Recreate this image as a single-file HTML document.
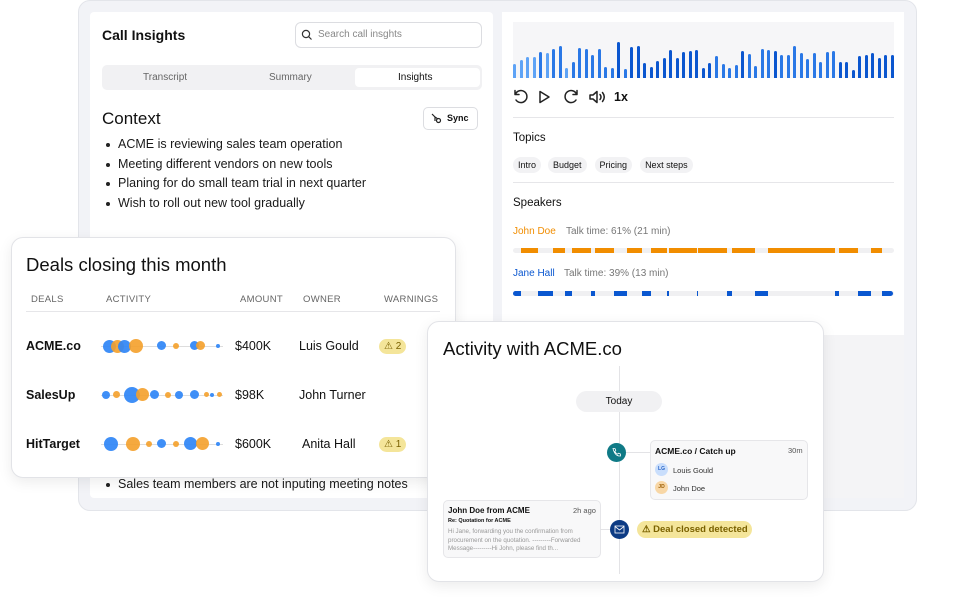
<!DOCTYPE html>
<html><head><meta charset="utf-8"><style>
*{box-sizing:border-box;margin:0;padding:0}
body{width:963px;height:600px;background:#fff;font-family:"Liberation Sans",sans-serif;color:#111;position:relative;overflow:hidden}
.a{position:absolute}
.frame{left:78px;top:0;width:839px;height:511px;background:#f2f3f7;border:1px solid #e3e5ea;border-radius:12px}
.lp{left:90px;top:12px;width:403px;height:486px;background:#fff;border-radius:4px}
.rp{left:502px;top:12px;width:402px;height:486px;background:#f4f4f6}
.rpw{left:502px;top:12px;width:402px;height:323px;background:#fff}
ul{list-style:none}
li{position:relative;padding-left:16px;font-size:12.5px;line-height:19.5px;color:#1a1a1a}
li:before{content:"";position:absolute;left:4px;top:8px;width:4px;height:4px;border-radius:50%;background:#222}
.card{background:#fff;border:1px solid #e2e3e7;border-radius:12px;box-shadow:0 4px 14px rgba(0,0,0,.08)}
.th{font-size:9.5px;color:#666;letter-spacing:.3px}
.dl{font-size:12.5px;font-weight:bold}
.tx{font-size:12.5px}
.warn{background:#f4e59a;color:#7a6100;border-radius:8px;font-size:10px;padding:2px 5px}
.c{position:absolute;border-radius:50%}
.b{background:#2f86f6;opacity:.92}.o{background:#f4a02a;opacity:.9}
.wf{left:513px;top:22px;width:381px;height:56px;background:#f6f6f8;display:flex;align-items:flex-end;justify-content:space-between;padding:0}
.wf i{display:block;width:3px;border-radius:2px 2px 0 0}
.l{background:#5ea3f6}.m{background:#2a78e6}.d{background:#0b56cf}
.tag{display:inline-block;background:#f2f2f4;border-radius:8px;font-size:9px;padding:3px 5px;margin-right:5px}
.seg{position:absolute;height:5px}
.or{background:#f18d00}.bl{background:#0a57d0}
</style></head><body>
<div class="a frame"></div>
<div class="a rp"></div>
<div class="a rpw"></div>
<div class="a lp"></div>

<!-- left panel -->
<div class="a" style="left:102px;top:27px;font-size:14px;font-weight:bold">Call Insights</div>
<div class="a" style="left:295px;top:22px;width:187px;height:26px;border:1px solid #dcdde1;border-radius:6px;background:#fff"></div>
<svg class="a" style="left:301px;top:29px" width="12" height="12" viewBox="0 0 12 12"><circle cx="5" cy="5" r="3.6" fill="none" stroke="#333" stroke-width="1.2"/><path d="M7.7 7.7L10.5 10.5" stroke="#333" stroke-width="1.2"/></svg>
<div class="a" style="left:318px;top:29px;font-size:10px;color:#888">Search call insghts</div>
<div class="a" style="left:102px;top:65px;width:380px;height:25px;background:#f1f1f3;border-radius:5px"></div>
<div class="a" style="left:355px;top:68px;width:125px;height:19px;background:#fff;border-radius:4px"></div>
<div class="a" style="left:143px;top:72px;font-size:10px;color:#666">Transcript</div>
<div class="a" style="left:269px;top:72px;font-size:10px;color:#666">Summary</div>
<div class="a" style="left:398px;top:72px;font-size:10px;color:#111">Insights</div>
<div class="a" style="left:102px;top:109px;font-size:17px">Context</div>
<div class="a" style="left:423px;top:107px;width:55px;height:23px;border:1px solid #dcdde1;border-radius:5px;background:#fff"></div>
<svg class="a" style="left:431px;top:113px" width="11" height="11" viewBox="0 0 11 11"><path d="M1 1L4 4M4 4L4 8M4 4L7 6" stroke="#222" stroke-width="1.2" fill="none"/><circle cx="7.5" cy="7.5" r="2" fill="none" stroke="#222" stroke-width="1.2"/></svg>
<div class="a" style="left:447px;top:113px;font-size:9px;font-weight:bold">Sync</div>
<ul class="a" style="left:102px;top:135px">
<li>ACME is reviewing sales team operation</li>
<li>Meeting different vendors on new tools</li>
<li>Planing for do small team trial in next quarter</li>
<li>Wish to roll out new tool gradually</li>
</ul>
<ul class="a" style="left:102px;top:475px"><li>Sales team members are not inputing meeting notes</li></ul>

<!-- waveform -->
<div class="a wf">
<i class="l" style="height:14px"></i><i class="l" style="height:18px"></i><i class="l" style="height:21px"></i><i class="l" style="height:21px"></i><i class="m" style="height:26px"></i><i class="l" style="height:25px"></i><i class="m" style="height:29px"></i><i class="m" style="height:32px"></i><i class="l" style="height:10px"></i><i class="m" style="height:16px"></i><i class="m" style="height:30px"></i><i class="m" style="height:29px"></i><i class="m" style="height:23px"></i><i class="m" style="height:29px"></i><i class="m" style="height:11px"></i><i class="m" style="height:10px"></i><i class="d" style="height:36px"></i><i class="m" style="height:9px"></i><i class="d" style="height:31px"></i><i class="d" style="height:32px"></i><i class="d" style="height:15px"></i><i class="d" style="height:11px"></i><i class="d" style="height:17px"></i><i class="d" style="height:20px"></i><i class="d" style="height:28px"></i><i class="d" style="height:20px"></i><i class="d" style="height:26px"></i><i class="d" style="height:27px"></i><i class="d" style="height:28px"></i><i class="d" style="height:10px"></i><i class="d" style="height:15px"></i><i class="m" style="height:22px"></i><i class="m" style="height:14px"></i><i class="m" style="height:10px"></i><i class="m" style="height:13px"></i><i class="d" style="height:27px"></i><i class="m" style="height:24px"></i><i class="m" style="height:12px"></i><i class="m" style="height:29px"></i><i class="m" style="height:28px"></i><i class="d" style="height:27px"></i><i class="m" style="height:23px"></i><i class="m" style="height:23px"></i><i class="m" style="height:32px"></i><i class="m" style="height:25px"></i><i class="m" style="height:19px"></i><i class="m" style="height:25px"></i><i class="m" style="height:16px"></i><i class="m" style="height:26px"></i><i class="m" style="height:27px"></i><i class="d" style="height:16px"></i><i class="d" style="height:16px"></i><i class="d" style="height:8px"></i><i class="d" style="height:22px"></i><i class="d" style="height:23px"></i><i class="d" style="height:25px"></i><i class="d" style="height:20px"></i><i class="d" style="height:23px"></i><i class="d" style="height:23px"></i>
</div>
<svg class="a" style="left:513px;top:89px" width="100" height="16" viewBox="0 0 100 16" fill="none" stroke="#222" stroke-width="1.5" stroke-linecap="round" stroke-linejoin="round">
<path d="M2.5 5A6 6 0 1 1 3 11M2 1.5V5.5H6"/>
<path d="M27 2.5L36 8L27 13.5Z"/>
<path d="M63.5 5A6 6 0 1 0 63 11M64 1.5V5.5H60"/>
<path d="M77 6H80L84 2.5V13.5L80 10H77Z M87 5.5Q89 8 87 10.5 M89.5 3.5Q93 8 89.5 12.5"/>
</svg>
<div class="a" style="left:614px;top:90px;font-size:12.5px;font-weight:bold">1x</div>
<div class="a" style="left:513px;top:117px;width:381px;height:1px;background:#e6e6e9"></div>
<div class="a" style="left:513px;top:132px;font-size:11.5px">Topics</div>
<div class="a" style="left:513px;top:155px"><span class="tag">Intro</span><span class="tag" style="margin-left:2px">Budget</span><span class="tag" style="margin-left:3px">Pricing</span><span class="tag" style="margin-left:3px">Next steps</span></div>
<div class="a" style="left:513px;top:182px;width:381px;height:1px;background:#e6e6e9"></div>
<div class="a" style="left:513px;top:197px;font-size:11.5px">Speakers</div>
<div class="a" style="left:513px;top:226px;font-size:10px;color:#f18d00">John Doe</div>
<div class="a" style="left:566px;top:226px;font-size:10px;color:#777">Talk time: 61% (21 min)</div>
<div class="a" style="left:513px;top:248px;width:381px;height:5px;background:#f0f0f2;border-radius:3px"></div>
<div class="seg or" style="left:521px;top:248px;width:17px"></div><div class="seg or" style="left:553px;top:248px;width:12px"></div><div class="seg or" style="left:572px;top:248px;width:19px"></div><div class="seg or" style="left:595px;top:248px;width:19px"></div><div class="seg or" style="left:627px;top:248px;width:15px"></div><div class="seg or" style="left:651px;top:248px;width:16px"></div><div class="seg or" style="left:669px;top:248px;width:28px"></div><div class="seg or" style="left:698px;top:248px;width:29px"></div><div class="seg or" style="left:732px;top:248px;width:23px"></div><div class="seg or" style="left:768px;top:248px;width:67px"></div><div class="seg or" style="left:839px;top:248px;width:19px"></div><div class="seg or" style="left:871px;top:248px;width:11px"></div>
<div class="a" style="left:513px;top:268px;font-size:10px;color:#0a57d0">Jane Hall</div>
<div class="a" style="left:564px;top:268px;font-size:10px;color:#777">Talk time: 39% (13 min)</div>
<div class="a" style="left:513px;top:291px;width:381px;height:5px;background:#f0f0f2;border-radius:3px"></div>
<div class="seg bl" style="left:513px;top:291px;width:8px;border-radius:3px 0 0 3px"></div><div class="seg bl" style="left:538px;top:291px;width:15px"></div><div class="seg bl" style="left:565px;top:291px;width:7px"></div><div class="seg bl" style="left:591px;top:291px;width:4px"></div><div class="seg bl" style="left:614px;top:291px;width:13px"></div><div class="seg bl" style="left:642px;top:291px;width:9px"></div><div class="seg bl" style="left:667px;top:291px;width:2px"></div><div class="seg bl" style="left:697px;top:291px;width:1px"></div><div class="seg bl" style="left:727px;top:291px;width:5px"></div><div class="seg bl" style="left:755px;top:291px;width:13px"></div><div class="seg bl" style="left:835px;top:291px;width:4px"></div><div class="seg bl" style="left:858px;top:291px;width:13px"></div><div class="seg bl" style="left:882px;top:291px;width:11px;border-radius:0 3px 3px 0"></div>

<!-- deals card -->
<div class="a card" style="left:11px;top:237px;width:445px;height:241px"></div>
<div class="a" style="left:26px;top:254px;font-size:18.5px">Deals closing this month</div>
<div class="a th" style="left:31px;top:294px">DEALS</div>
<div class="a th" style="left:106px;top:294px">ACTIVITY</div>
<div class="a th" style="left:240px;top:294px">AMOUNT</div>
<div class="a th" style="left:303px;top:294px">OWNER</div>
<div class="a th" style="left:384px;top:294px">WARNINGS</div>
<div class="a" style="left:26px;top:311px;width:414px;height:1px;background:#e6e6e9"></div>
<div class="a dl" style="left:26px;top:339px">ACME.co</div>
<div class="a dl" style="left:26px;top:388px">SalesUp</div>
<div class="a dl" style="left:26px;top:437px">HitTarget</div>
<div class="a tx" style="left:235px;top:339px">$400K</div>
<div class="a tx" style="left:235px;top:388px">$98K</div>
<div class="a tx" style="left:235px;top:437px">$600K</div>
<div class="a tx" style="left:299px;top:339px">Luis Gould</div>
<div class="a tx" style="left:299px;top:388px">John Turner</div>
<div class="a tx" style="left:302px;top:437px">Anita Hall</div>
<div class="a warn" style="left:379px;top:339px">⚠ 2</div>
<div class="a warn" style="left:379px;top:437px">⚠ 1</div>
<div class="a" style="left:101px;top:346px;width:122px;height:1px;background:#ddd"></div>
<div class="a" style="left:101px;top:395px;width:122px;height:1px;background:#ddd"></div>
<div class="a" style="left:101px;top:444px;width:122px;height:1px;background:#ddd"></div>
<div class="c b" style="left:103px;top:340px;width:13px;height:13px"></div><div class="c o" style="left:111px;top:340px;width:13px;height:13px"></div><div class="c b" style="left:118px;top:340px;width:13px;height:13px"></div><div class="c o" style="left:129px;top:339px;width:14px;height:14px"></div><div class="c b" style="left:157px;top:341px;width:9px;height:9px"></div><div class="c o" style="left:173px;top:343px;width:6px;height:6px"></div><div class="c b" style="left:190px;top:341px;width:9px;height:9px"></div><div class="c o" style="left:196px;top:341px;width:9px;height:9px"></div><div class="c b" style="left:216px;top:344px;width:4px;height:4px"></div>
<div class="c b" style="left:102px;top:391px;width:8px;height:8px"></div><div class="c o" style="left:113px;top:391px;width:7px;height:7px"></div><div class="c b" style="left:124px;top:387px;width:16px;height:16px"></div><div class="c o" style="left:136px;top:388px;width:13px;height:13px"></div><div class="c b" style="left:150px;top:390px;width:9px;height:9px"></div><div class="c o" style="left:165px;top:392px;width:6px;height:6px"></div><div class="c b" style="left:175px;top:391px;width:8px;height:8px"></div><div class="c b" style="left:190px;top:390px;width:9px;height:9px"></div><div class="c o" style="left:204px;top:392px;width:5px;height:5px"></div><div class="c b" style="left:210px;top:393px;width:4px;height:4px"></div><div class="c o" style="left:217px;top:392px;width:5px;height:5px"></div>
<div class="c b" style="left:104px;top:437px;width:14px;height:14px"></div><div class="c o" style="left:126px;top:437px;width:14px;height:14px"></div><div class="c o" style="left:146px;top:441px;width:6px;height:6px"></div><div class="c b" style="left:157px;top:439px;width:9px;height:9px"></div><div class="c o" style="left:173px;top:441px;width:6px;height:6px"></div><div class="c b" style="left:184px;top:437px;width:13px;height:13px"></div><div class="c o" style="left:196px;top:437px;width:13px;height:13px"></div><div class="c b" style="left:216px;top:442px;width:4px;height:4px"></div>

<!-- activity card -->
<div class="a card" style="left:427px;top:321px;width:397px;height:261px"></div>
<div class="a" style="left:443px;top:338px;font-size:18.5px">Activity with ACME.co</div>
<div class="a" style="left:619px;top:366px;width:1px;height:208px;background:#e3e3e6"></div>
<div class="a" style="left:576px;top:391px;width:86px;height:21px;background:#f1f1f3;border-radius:11px;font-size:10px;text-align:center;line-height:21px">Today</div>
<div class="a" style="left:620px;top:452px;width:30px;height:1px;background:#e3e3e6"></div>
<div class="a" style="left:607px;top:443px;width:19px;height:19px;border-radius:50%;background:#0f7a86"></div>
<svg class="a" style="left:611px;top:447px" width="11" height="11" viewBox="0 0 11 11"><path d="M2 1.5L4 1.5L4.8 3.5L3.8 4.5Q5 6.5 6.5 7.2L7.5 6.2L9.5 7V9Q4 9.5 2 1.5Z" fill="none" stroke="#fff" stroke-width=".8"/></svg>
<div class="a" style="left:650px;top:440px;width:158px;height:60px;background:#f8f8f9;border:1px solid #e6e6e9;border-radius:5px"></div>
<div class="a" style="left:655px;top:446px;font-size:8.5px;font-weight:bold">ACME.co / Catch up</div>
<div class="a" style="left:788px;top:446px;font-size:7.5px;color:#555">30m</div>
<div class="a" style="left:655px;top:463px;width:13px;height:13px;border-radius:50%;background:#c9defc;font-size:5px;text-align:center;line-height:13px;color:#2a66c8;font-weight:bold">LG</div>
<div class="a" style="left:673px;top:466px;font-size:7.5px;color:#333">Louis Gould</div>
<div class="a" style="left:655px;top:481px;width:13px;height:13px;border-radius:50%;background:#f8d7a6;font-size:5px;text-align:center;line-height:13px;color:#9a5b00;font-weight:bold">JD</div>
<div class="a" style="left:673px;top:484px;font-size:7.5px;color:#333">John Doe</div>
<div class="a" style="left:443px;top:500px;width:158px;height:58px;background:#f8f8f9;border:1px solid #e6e6e9;border-radius:5px"></div>
<div class="a" style="left:448px;top:506px;font-size:8px;font-weight:bold">John Doe from ACME</div>
<div class="a" style="left:573px;top:506px;font-size:7.5px;color:#555">2h ago</div>
<div class="a" style="left:448px;top:518px;font-size:5.5px;font-weight:bold">Re: Quotation for ACME</div>
<div class="a" style="left:448px;top:528px;font-size:6.2px;color:#999;line-height:8.7px;width:150px;white-space:nowrap">Hi Jane, forwarding you the confirmation from<br>procurement on the quotation.  ---------Forwarded<br>Message---------Hi John, please find th...</div>
<div class="a" style="left:600px;top:529px;width:12px;height:1px;background:#e3e3e6"></div>
<div class="a" style="left:610px;top:520px;width:19px;height:19px;border-radius:50%;background:#0d3b84"></div>
<svg class="a" style="left:614px;top:525px" width="11" height="9" viewBox="0 0 11 9"><rect x="1" y="1" width="9" height="7" fill="none" stroke="#fff" stroke-width=".8"/><path d="M1 1.5L5.5 5L10 1.5" fill="none" stroke="#fff" stroke-width=".8"/></svg>
<div class="a" style="left:637px;top:521px;width:115px;height:17px;background:#f4e59a;border-radius:9px;font-size:9.5px;color:#7a6100;line-height:17px;padding-left:5px;white-space:nowrap;font-weight:bold">⚠ Deal closed detected</div>
</body></html>
